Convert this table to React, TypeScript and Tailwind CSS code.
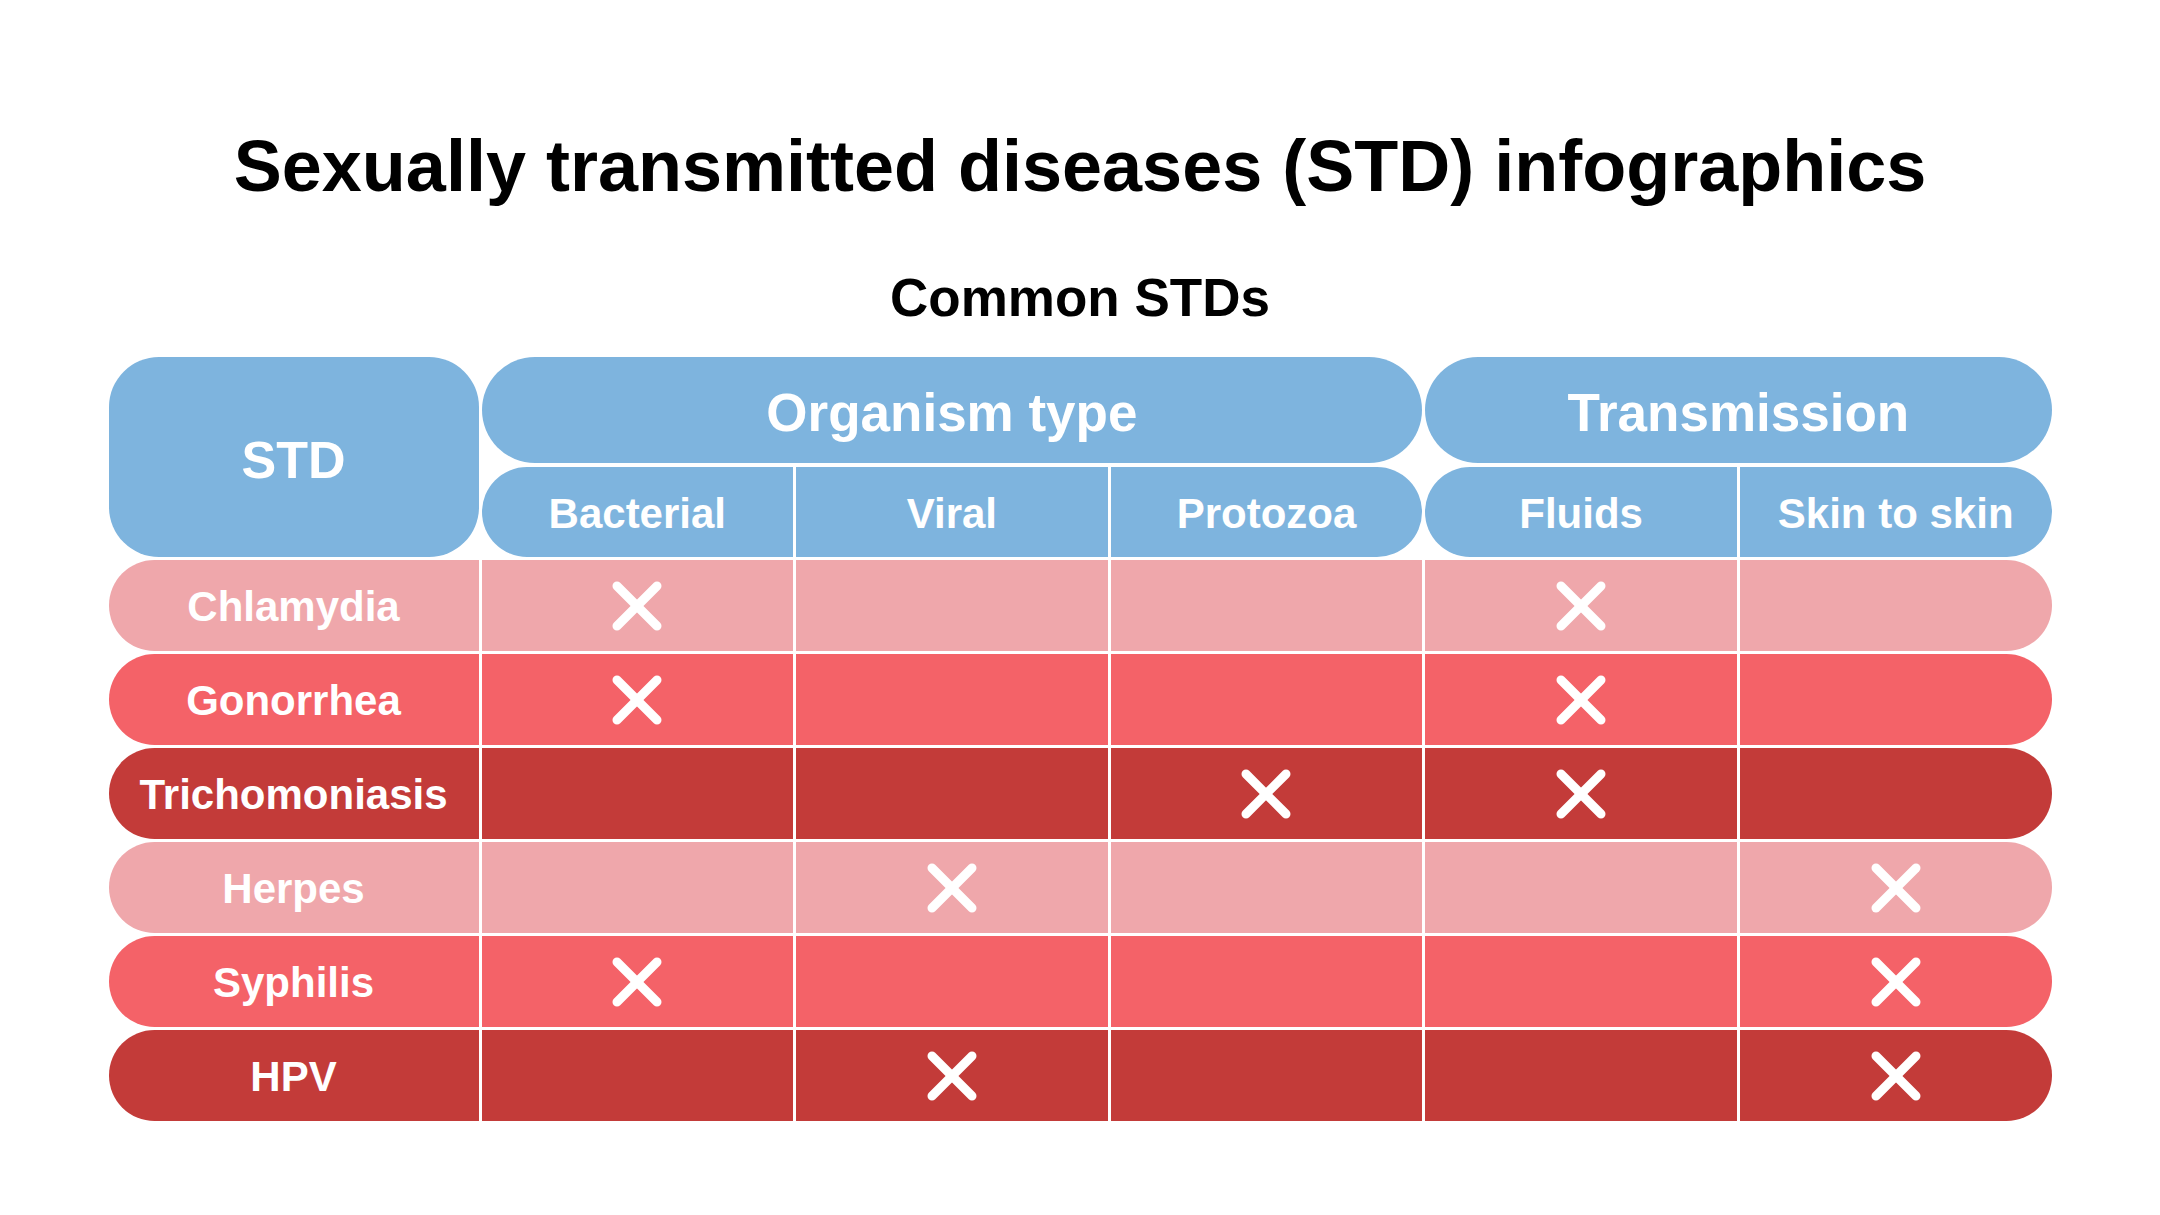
import React from "react";

const BLUE = "bg-[#7eb4de]";

type Row = { name: string; tone: "light" | "mid" | "dark"; marks: boolean[] };

const rows: Row[] = [
  { name: "Chlamydia", tone: "light", marks: [true, false, false, true, false] },
  { name: "Gonorrhea", tone: "mid", marks: [true, false, false, true, false] },
  { name: "Trichomoniasis", tone: "dark", marks: [false, false, true, true, false] },
  { name: "Herpes", tone: "light", marks: [false, true, false, false, true] },
  { name: "Syphilis", tone: "mid", marks: [true, false, false, false, true] },
  { name: "HPV", tone: "dark", marks: [false, true, false, false, true] },
];

const toneClass: Record<Row["tone"], string> = {
  light: "bg-[#efa7ab]",
  mid: "bg-[#f46268]",
  dark: "bg-[#c33b39]",
};

function Cross() {
  return (
    <svg width="50" height="50" viewBox="0 0 50 50" aria-hidden="true">
      <line x1="5" y1="5" x2="45" y2="45" stroke="#ffffff" strokeWidth="9" strokeLinecap="round" />
      <line x1="45" y1="5" x2="5" y2="45" stroke="#ffffff" strokeWidth="9" strokeLinecap="round" />
    </svg>
  );
}

export default function App() {
  return (
    <div className="w-[2160px] h-[1215px] bg-white flex flex-col items-center font-['Liberation_Sans',Arial,sans-serif] text-black">
      <h1 className="mt-[130px] text-[72px] leading-none font-bold">
        Sexually transmitted diseases (STD) infographics
      </h1>
      <h2 className="mt-[69px] text-[53px] leading-none font-bold">Common STDs</h2>

      <div className="mt-[33px] w-[1943px] flex flex-col gap-[3px] text-white font-bold">
        <div className="grid grid-cols-[370px_repeat(5,minmax(0,1fr))] grid-rows-[106px_90px] gap-x-[3px] gap-y-[4px]">
          <div className={`row-span-2 rounded-[50px] ${BLUE} flex items-center justify-center pt-[5px] text-[52px] leading-none`}>
            STD
          </div>
          <div className={`col-span-3 rounded-full ${BLUE} flex items-center justify-center pt-[5px] text-[53px] leading-none`}>
            Organism type
          </div>
          <div className={`col-span-2 rounded-full ${BLUE} flex items-center justify-center pt-[5px] text-[53px] leading-none`}>
            Transmission
          </div>
          <div className="col-span-3 rounded-full overflow-hidden grid grid-cols-3 gap-x-[3px] bg-white text-[42px] leading-none">
            {["Bacterial", "Viral", "Protozoa"].map((t) => (
              <div key={t} className={`${BLUE} flex items-center justify-center pt-[4px]`}>
                {t}
              </div>
            ))}
          </div>
          <div className="col-span-2 rounded-full overflow-hidden grid grid-cols-2 gap-x-[3px] bg-white text-[42px] leading-none">
            {["Fluids", "Skin to skin"].map((t) => (
              <div key={t} className={`${BLUE} flex items-center justify-center pt-[4px]`}>
                {t}
              </div>
            ))}
          </div>
        </div>

        {rows.map((r) => (
          <div
            key={r.name}
            className="h-[91px] rounded-full overflow-hidden grid grid-cols-[370px_repeat(5,minmax(0,1fr))] gap-x-[3px] bg-white"
          >
            <div className={`${toneClass[r.tone]} flex items-center justify-center pt-[3px] text-[42px] leading-none`}>
              {r.name}
            </div>
            {r.marks.map((m, i) => (
              <div key={i} className={`${toneClass[r.tone]} flex items-center justify-center`}>
                {m ? <Cross /> : null}
              </div>
            ))}
          </div>
        ))}
      </div>
    </div>
  );
}
